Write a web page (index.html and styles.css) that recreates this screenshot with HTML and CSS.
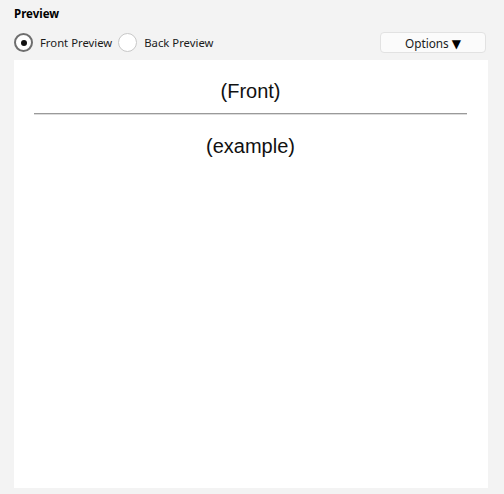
FILE: index.html
```html
<!DOCTYPE html>
<html lang="en">
  <head>
    <meta charset="UTF-8" />
    <title>Preview</title>
    <link rel="stylesheet" href="styles.css">
  </head>
  <body>
    <div class="page">
      <h1 class="title">Preview</h1>
      <div class="toolbar">
        <label class="radio">
          <span class="radio-mark checked"></span>
          <span>Front Preview</span>
        </label>
        <label class="radio">
          <span class="radio-mark"></span>
          <span>Back Preview</span>
        </label>
        <button type="button" class="options">Options <span class="caret">▼</span></button>
      </div>
      <div class="preview">
        <div class="card-text">(Front)</div>
        <hr class="divider" />
        <div class="card-text">(example)</div>
      </div>
    </div>
  </body>
</html>
```

FILE: styles.css
```css
*,
*::before,
*::after {
  box-sizing: border-box;
}
* {
  margin: 0;
}
html,
body {
  height: 100%;
}
body {
  background-color: #f3f3f3;
  font-family: "Noto Sans", "Open Sans", sans-serif;
  font-size: 11.3px;
  color: #1a1a1a;
}

.page {
  display: flex;
  flex-direction: column;
  height: 100%;
  padding: 6px 16px 6px 14px;
}

.title {
  font-size: 11.5px;
  font-weight: bold;
  line-height: 16px;
  color: #000;
}

.toolbar {
  display: flex;
  align-items: center;
  height: 21px;
  margin-top: 10px;
}

.radio {
  display: flex;
  align-items: center;
  gap: 7px;
  margin-right: 6px;
}

.radio-mark {
  width: 19px;
  height: 19px;
  border-radius: 50%;
  border: 1px solid #c8c8c8;
  background-color: #fff;
  display: flex;
  align-items: center;
  justify-content: center;
}

.radio-mark.checked {
  border: 2px solid #6e6e6e;
}

.radio-mark.checked::after {
  content: "";
  width: 6px;
  height: 6px;
  border-radius: 50%;
  background-color: #111;
}

.options {
  margin-left: auto;
  margin-right: 2px;
  width: 106px;
  height: 21px;
  padding: 0;
  border: 1px solid #e2e2e2;
  border-radius: 4px;
  background-color: #fbfbfb;
  font-family: inherit;
  font-size: 11.8px;
  color: #1a1a1a;
}

.caret {
  font-family: "DejaVu Sans", sans-serif;
  font-size: 12px;
  color: #000;
}

.preview {
  flex: 1;
  margin-top: 7px;
  background-color: #fff;
  padding: 20px 21px 0 20px;
}

.card-text {
  font-family: "Liberation Sans", Arial, sans-serif;
  font-size: 20px;
  line-height: 23px;
  text-align: center;
  color: #111;
}

.divider {
  border: none;
  border-top: 1px solid #9a9a9a;
  border-bottom: 1px solid #dcdcdc;
  margin: 10px 0 20px;
}
```
